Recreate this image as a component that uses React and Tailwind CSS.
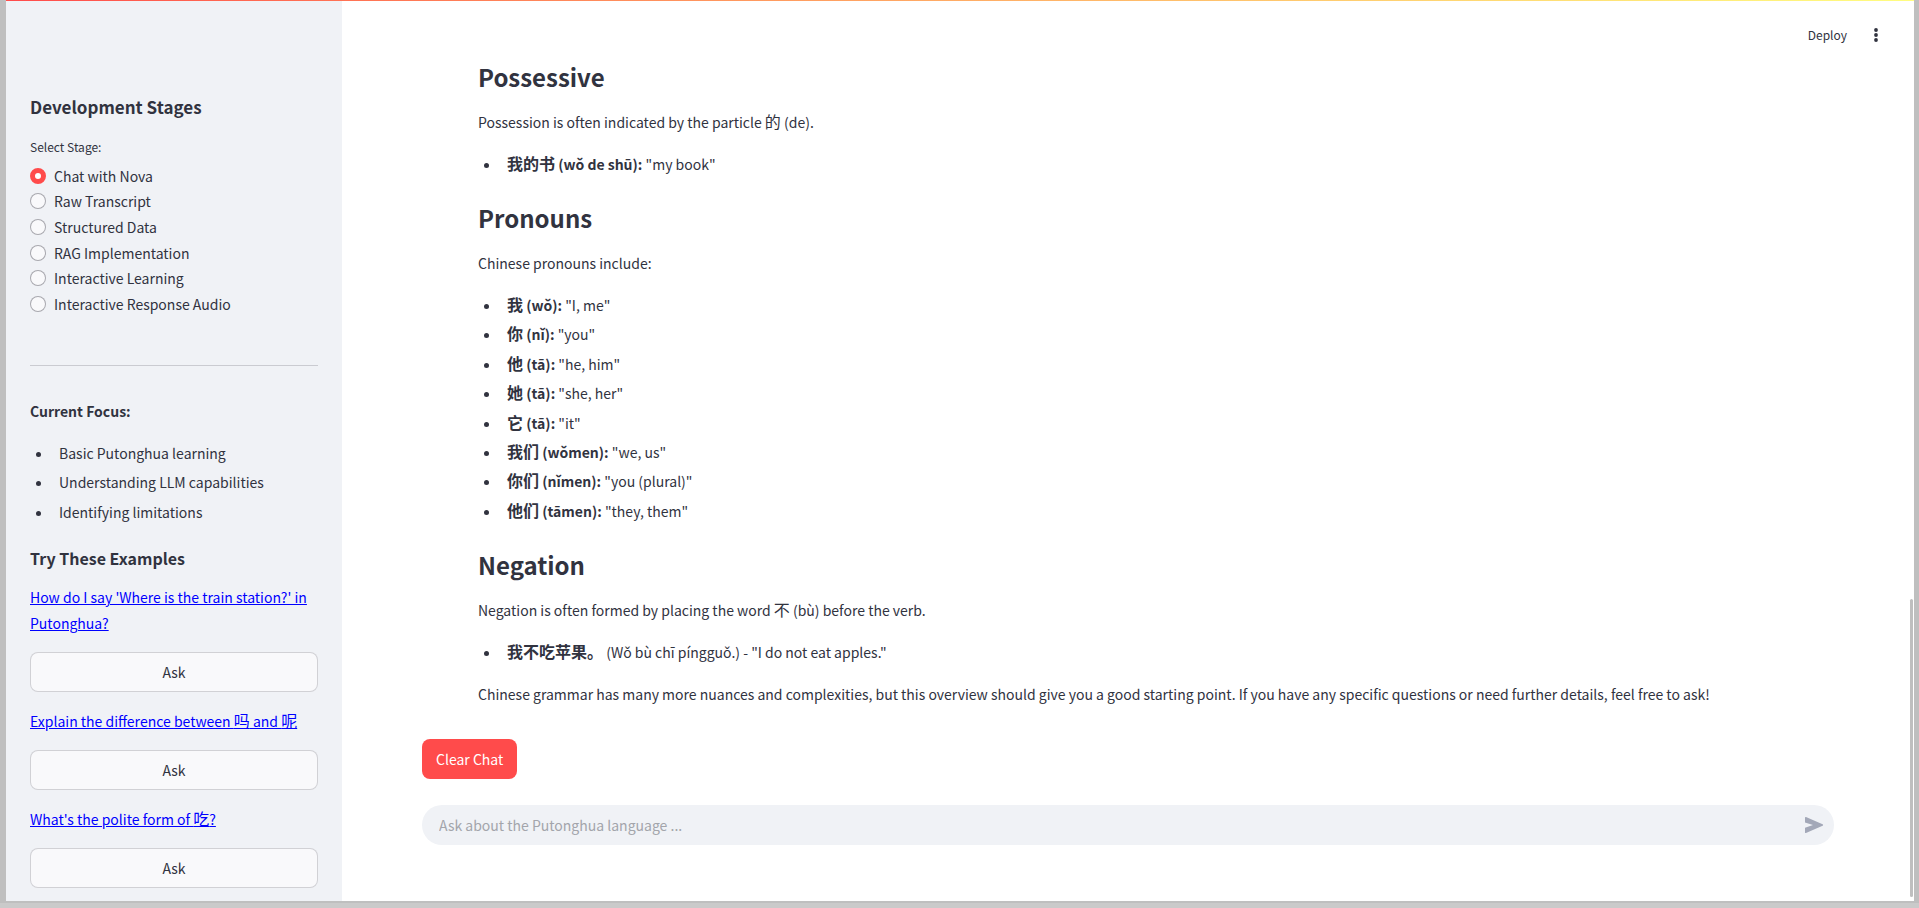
import React, { useState } from "react";

const stages = [
  "Chat with Nova",
  "Raw Transcript",
  "Structured Data",
  "RAG Implementation",
  "Interactive Learning",
  "Interactive Response Audio",
];

const focus = [
  "Basic Putonghua learning",
  "Understanding LLM capabilities",
  "Identifying limitations",
];

const pronouns = [
  ["我", "(wǒ):", "\"I, me\""],
  ["你", "(nǐ):", "\"you\""],
  ["他", "(tā):", "\"he, him\""],
  ["她", "(tā):", "\"she, her\""],
  ["它", "(tā):", "\"it\""],
  ["我们", "(wǒmen):", "\"we, us\""],
  ["你们", "(nǐmen):", "\"you (plural)\""],
  ["他们", "(tāmen):", "\"they, them\""],
];

function Han({ children }) {
  return <span lang="zh-CN" className="text-base leading-none">{children}</span>;
}

function H2({ children }) {
  return <h2 className="mt-[22px] mb-[15px] text-2xl leading-[34px] font-semibold first:mt-0">{children}</h2>;
}

function P({ children }) {
  return <p className="leading-[26px]">{children}</p>;
}

function List({ children, className = "" }) {
  return (
    <ul className={"mt-[15px] grid auto-rows-fr list-disc leading-[29px] " + className}>
      {children}
    </ul>
  );
}

function Item({ children }) {
  return <li className="ml-[23px] pl-[6px]">{children}</li>;
}

function Example({ children }) {
  return (
    <div className="flex flex-col gap-4">
      <a href="#ask" className="leading-[26px] text-[#0000ff] underline">{children}</a>
      <button type="button" className="h-10 w-full rounded-lg border border-[#31333f]/20 bg-[#f9f9fb]">
        Ask
      </button>
    </div>
  );
}

function Sidebar() {
  const [stage, setStage] = useState(stages[0]);
  return (
    <aside className="w-[336px] shrink-0 bg-[#f0f2f6] px-6 pt-[94px] pb-3">
      <h2 className="text-[17px] leading-6 font-semibold">Development Stages</h2>
      <fieldset className="mt-4">
        <legend className="text-xs leading-6">Select Stage:</legend>
        <div className="mt-1 grid min-h-[154px] auto-rows-fr">
          {stages.map((name) => (
            <label key={name} className="flex items-center gap-2">
              <input
                type="radio"
                name="stage"
                checked={stage === name}
                onChange={() => setStage(name)}
                className="size-4 appearance-none rounded-full border border-[#31333f]/40 bg-[#f9f9fb] checked:border-5 checked:border-[#ff4b4b] checked:bg-white"
              />
              {name}
            </label>
          ))}
        </div>
      </fieldset>
      <hr className="mt-12 mb-8 border-[#31333f]/20" />
      <p className="leading-[26px] font-semibold">Current Focus:</p>
      <List className="min-h-[88px]">
        {focus.map((text) => (
          <Item key={text}>{text}</Item>
        ))}
      </List>
      <h3 className="mt-[19px] mb-[14px] text-base leading-6 font-semibold">Try These Examples</h3>
      <div className="flex flex-col gap-4">
        <Example>How do I say 'Where is the train station?' in Putonghua?</Example>
        <Example>Explain the difference between <Han>吗</Han> and <Han>呢</Han></Example>
        <Example>What's the polite form of <Han>吃</Han>?</Example>
      </div>
    </aside>
  );
}

export default function App() {
  return (
    <div className="min-h-screen bg-[#cacaca] pb-[5px] font-['Noto_Sans_CJK_SC',sans-serif] text-sm text-[#31333f]">
      <div className="flex min-h-[calc(100vh-5px)] flex-col border-r-5 border-b-2 border-l-6 border-[#bfbfbf] bg-white">
        <div className="h-px bg-linear-to-r from-[#ff4b4b] to-[#fffd80]" />
        <div className="relative flex flex-1">
          <Sidebar />
          <main className="min-w-0 flex-1">
            <header className="flex h-[59px] items-center justify-end gap-6 pt-2 pr-[33px]">
              <button type="button" className="text-xs">Deploy</button>
              <button type="button" aria-label="Main menu">
                <svg viewBox="0 0 10 16" className="h-4 w-[10px]" fill="currentColor">
                  <circle cx="5" cy="3" r="1.9" />
                  <circle cx="5" cy="8" r="1.9" />
                  <circle cx="5" cy="13" r="1.9" />
                </svg>
              </button>
            </header>
            <div className="px-20">
              <article className="px-14">
                <H2>Possessive</H2>
                <P>Possession is often indicated by the particle <Han>的</Han> (de).</P>
                <List>
                  <Item><strong className="font-semibold"><Han>我的书</Han> (wǒ de shū):</strong> "my book"</Item>
                </List>
                <H2>Pronouns</H2>
                <P>Chinese pronouns include:</P>
                <List className="min-h-[235px]">
                  {pronouns.map(([han, pinyin, meaning]) => (
                    <Item key={han}>
                      <strong className="font-semibold"><Han>{han}</Han> {pinyin}</strong> {meaning}
                    </Item>
                  ))}
                </List>
                <H2>Negation</H2>
                <P>Negation is often formed by placing the word <Han>不</Han> (bù) before the verb.</P>
                <List className="mb-[14px]">
                  <Item><strong className="font-semibold"><Han>我不吃苹果。</Han></strong> (Wǒ bù chī píngguǒ.) - "I do not eat apples."</Item>
                </List>
                <P>Chinese grammar has many more nuances and complexities, but this overview should give you a good starting point. If you have any specific questions or need further details, feel free to ask!</P>
              </article>
              <button type="button" className="mt-8 h-10 rounded-lg bg-[#ff4b4b] px-[14px] text-white">
                Clear Chat
              </button>
              <form className="mt-[26px] flex h-10 items-center rounded-full bg-[#f0f2f6] pr-2 pl-[17px]" onSubmit={(e) => e.preventDefault()}>
                <input
                  type="text"
                  aria-label="Ask about the Putonghua language"
                  placeholder="Ask about the Putonghua language ..."
                  className="min-w-0 flex-1 bg-transparent outline-none placeholder:text-[#a3a5ab]"
                />
                <button type="submit" aria-label="Send">
                  <svg viewBox="0 0 24 24" className="size-6" fill="#a3a8b8">
                    <path d="M3 4.6c0-.5.5-.8 1-.6l16.6 7.2c.7.3.7 1.3 0 1.6L4 20c-.5.2-1-.1-1-.6v-4.6L11 12 3 9.4z" />
                  </svg>
                </button>
              </form>
            </div>
          </main>
          <div className="absolute right-px bottom-1 h-[298px] w-[3px] rounded-full bg-[#bfbfbf]" />
        </div>
      </div>
    </div>
  );
}
